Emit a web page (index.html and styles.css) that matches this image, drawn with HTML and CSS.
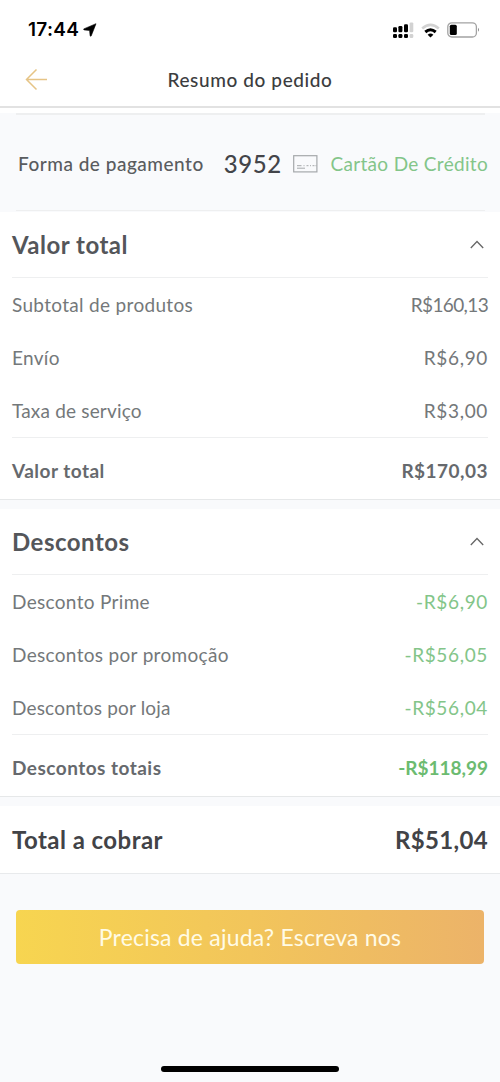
FILE: index.html
```html
<!DOCTYPE html>
<html lang="pt-BR">
<head>
<meta charset="utf-8">
<title>Resumo do pedido</title>
<link rel="stylesheet" href="styles.css">
</head>
<body>
<div class="status">
  <div class="clock"><span class="time">17:44</span>
    <svg width="14" height="14" viewBox="0 0 14 14"><path d="M13 .7.8 5.900Q.400 6.700 1.200 6.900L6.600 7.400 7.100 12.800Q7.500 13.500 8.200 12.900z" fill="#000" stroke="#000" stroke-width=".6" stroke-linejoin="round"/></svg>
  </div>
  <div class="indicators">
    <svg class="signal" width="21" height="17" viewBox="0 0 21 17"><g fill="#000"><rect x="0" y="5.3" width="4" height="5" rx="1.2"/><rect x="5.4" y="4" width="4" height="6.3" rx="1.2"/><rect x="11" y="2.2" width="4" height="8.1" rx="1.2"/><rect x="0" y="12" width="4" height="4" rx="1.3"/><rect x="5.4" y="12" width="4" height="4" rx="1.3"/><rect x="11" y="12" width="4" height="4" rx="1.3"/></g><g fill="#d2d2d2"><rect x="16.6" y=".4" width="3.7" height="9.9" rx="1.2"/><rect x="16.6" y="12" width="3.7" height="4" rx="1.3"/></g></svg>
    <svg class="wifi" width="19" height="15" viewBox="0 0 19 15"><path d="M1.200 5.400Q9.500-1.800 17.800 5.400" fill="none" stroke="#d2d2d2" stroke-width="2.600"/><path d="M4.300 9Q9.500 4.600 14.700 9" fill="none" stroke="#000" stroke-width="3"/><path d="M9.500 14.600 6.600 11.800Q9.500 9.400 12.400 11.800z" fill="#000"/></svg>
    <svg class="battery" width="33" height="16" viewBox="0 0 33 16"><rect x=".8" y=".8" width="28.600" height="14.200" rx="4" fill="#fff" stroke="#a3a3a3" stroke-width="1.300"/><rect x="2.800" y="2.800" width="7" height="10.300" rx="1.500" fill="#000"/><path d="M31 5.800q2 2 0 4z" fill="#888"/></svg>
  </div>
</div>
<header class="header">
  <svg class="back" width="23" height="22" viewBox="0 0 23 22"><path d="M22 10.500H1.500M11.500.500 1.500 10.500l10 10" fill="none" stroke="#e6c486" stroke-width="1.500"/></svg>
  <h1 class="title">Resumo do pedido</h1>
</header>
<section class="payment">
  <span class="pay-label">Forma de pagamento</span>
  <span class="pay-digits">3952</span>
  <svg class="card-icon" width="25" height="18" viewBox="0 0 25 18"><rect x=".7" y=".7" width="23.200" height="16.200" fill="none" stroke="#a5a8ab" stroke-width="1.200"/><path d="M4 10.700h4.500M4 13.200h8M10.500 10.700h1M13.500 10.700h2M17 10.700h1M19.500 10.700h2M22.500 10.700h1" stroke="#a5a8ab"/></svg>
  <span class="pay-method">Cartão De Crédito</span>
</section>
<section class="block">
  <div class="head"><h2>Valor total</h2><svg width="14" height="9" viewBox="0 0 14 9"><path d="m.8 8 6.200-6.500L13.200 8" fill="none" stroke="#666" stroke-width="1.300"/></svg></div>
  <div class="rows">
    <div class="row"><span>Subtotal de produtos</span><span class="amount narrow">R$160,13</span></div>
    <div class="row"><span>Envío</span><span class="amount">R$6,90</span></div>
    <div class="row"><span class="snug">Taxa de serviço</span><span class="amount">R$3,00</span></div>
  </div>
  <div class="sum"><span>Valor total</span><span>R$170,03</span></div>
</section>
<section class="block discounts">
  <div class="head"><h2>Descontos</h2><svg width="14" height="9" viewBox="0 0 14 9"><path d="m.8 8 6.200-6.500L13.200 8" fill="none" stroke="#666" stroke-width="1.300"/></svg></div>
  <div class="rows">
    <div class="row"><span>Desconto Prime</span><span class="amount">-R$6,90</span></div>
    <div class="row"><span>Descontos por promoção</span><span class="amount">-R$56,05</span></div>
    <div class="row"><span class="snug">Descontos por loja</span><span class="amount">-R$56,04</span></div>
  </div>
  <div class="sum"><span>Descontos totais</span><span class="saved">-R$118,99</span></div>
</section>
<section class="grand"><span>Total a cobrar</span><span class="due">R$51,04</span></section>
<footer class="footer">
  <button class="help">Precisa de ajuda? Escreva nos</button>
  <div class="home"></div>
</footer>
</body>
</html>
```
FILE: styles.css
```css
* { box-sizing: border-box; }
body {
  margin: 0;
  height: 1082px;
  display: flex;
  flex-direction: column;
  background: #f9fafc;
  color: #74787a;
  font-family: Lato, sans-serif;
  font-size: 19px;
  line-height: 24px;
}
svg { display: block; flex: none; }
h1, h2 { margin: 0; }
.status {
  height: 54px;
  padding: 6px 20px 0 28px;
  display: flex;
  justify-content: space-between;
  align-items: center;
  background: #fff;
}
.clock { display: flex; align-items: center; gap: 4px; }
.time { font: 600 19px/24px Inter, sans-serif; letter-spacing: .3px; color: #000; }
.indicators { display: flex; align-items: center; gap: 7px; }
.header {
  height: 54px;
  padding: 0 25px;
  display: grid;
  grid-template-columns: 23px 1fr 23px;
  align-items: center;
  background: #fff;
  border-bottom: 2px solid #e2e2e2;
}
.title {
  text-align: center;
  font-size: 19px;
  font-weight: 500;
  letter-spacing: .6px;
  color: #3c3d40;
}
.payment {
  height: 104px;
  padding: 2px 12px 0 18px;
  display: flex;
  align-items: center;
  border-top: 5px solid #fff;
  background:
    linear-gradient(#eeeff0, #eeeff0) 16px 0 / 469px 2px no-repeat,
    linear-gradient(#eeeff0, #eeeff0) 16px 97px / 469px 1px no-repeat,
    #f9fafc;
}
.pay-label { color: #5a5c5f; font-weight: 500; letter-spacing: .5px; }
.pay-digits {
  margin-left: 20px;
  color: #434449;
  font-size: 24px;
  font-weight: 500;
  letter-spacing: .6px;
}
.card-icon { margin-left: 11px; }
.pay-method { margin-left: auto; color: #83c589; letter-spacing: .32px; }
.block {
  height: 288px;
  background: #fff;
  border-bottom: 1px solid #e6e8e9;
}
.discounts { margin-top: 9px; }
.head, .rows { margin: 0 12px; border-bottom: 1px solid #eeeff0; }
.head {
  height: 66px;
  display: flex;
  align-items: center;
  justify-content: space-between;
  padding-right: 4px;
}
h2 { font-size: 24px; color: #54565a; letter-spacing: .5px; }
.rows { height: 160px; }
.row, .sum, .grand { display: flex; justify-content: space-between; align-items: center; }
.row { height: 53px; letter-spacing: .32px; }
.snug { letter-spacing: .18px; }
.amount { letter-spacing: .65px; }
.narrow { letter-spacing: -.65px; }
.sum {
  height: 65px;
  padding: 0 12px;
  color: #66696d;
  font-weight: 700;
  letter-spacing: .48px;
}
.discounts .amount { color: #83c589; }
.sum .saved { color: #6cbb70; letter-spacing: 0; }
.grand {
  height: 68px;
  margin-top: 9px;
  padding: 0 12px;
  background: #fff;
  border-bottom: 1px solid #e8eaec;
  color: #424347;
  font-size: 24px;
  font-weight: 700;
  letter-spacing: .45px;
}
.due { letter-spacing: .35px; }
.footer {
  flex: 1;
  padding: 36px 16px 10px;
  display: flex;
  flex-direction: column;
  align-items: center;
}
.help {
  width: 100%;
  height: 54px;
  border: 0;
  border-radius: 4px;
  background: linear-gradient(90deg, #f7d550, #f2c55b 50%, #ecb369);
  color: #fffbe6;
  font: 400 23px/28px Lato, sans-serif;
  letter-spacing: .2px;
}
.home { width: 178px; height: 6px; margin-top: auto; border-radius: 3px; background: #000; }
```
